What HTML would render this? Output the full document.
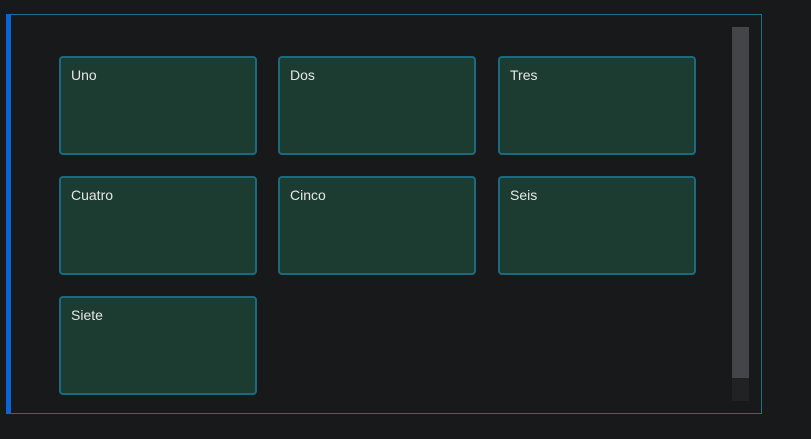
<!DOCTYPE html>
<html><head><meta charset="utf-8"><style>
html,body{margin:0;padding:0;width:811px;height:439px;background:#18191b;overflow:hidden;font-family:"Liberation Sans",sans-serif}
.frame{position:absolute;left:6px;top:14px;width:756px;height:400px;border:1px solid #1f6f8f;border-left:none;box-sizing:border-box}
.bar{position:absolute;left:6px;top:14px;width:5px;height:400px;background:#0a66d6}
.track{position:absolute;left:732px;top:27px;width:17px;height:374px;background:#202223}
.thumb{position:absolute;left:732px;top:27px;width:17px;height:351px;background:#434548}
.card{position:absolute;width:198px;height:99px;box-sizing:border-box;border:2px solid #1b6a80;border-radius:4px;background:#1d3c31;color:#e6e6e6;font-size:14px;padding:9px 0 0 10px}
</style></head><body>
<div class="frame"></div><div class="bar"></div>
<div class="track"></div><div class="thumb"></div>
<div class="card" style="left:59px;top:56px">Uno</div>
<div class="card" style="left:278px;top:56px">Dos</div>
<div class="card" style="left:498px;top:56px">Tres</div>
<div class="card" style="left:59px;top:176px">Cuatro</div>
<div class="card" style="left:278px;top:176px">Cinco</div>
<div class="card" style="left:498px;top:176px">Seis</div>
<div class="card" style="left:59px;top:296px">Siete</div>
</body></html>
